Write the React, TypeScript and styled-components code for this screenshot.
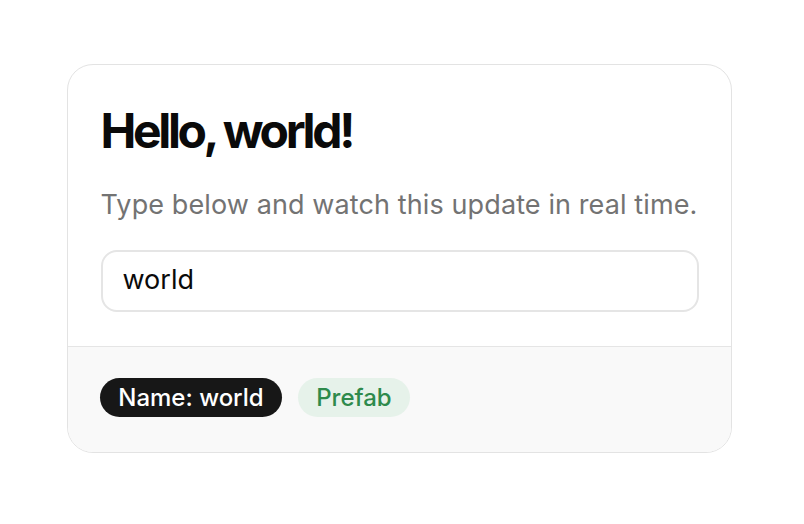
import React, { useState } from "react";
import styled, { createGlobalStyle } from "styled-components";

const Global = createGlobalStyle`
  html, body { margin: 0; padding: 0; background: #ffffff; }
  body { font-family: Inter, "Noto Sans", sans-serif; }
`;

const Page = styled.div`
  width: 804px;
  height: 524px;
  display: flex;
  align-items: flex-start;
  justify-content: flex-start;
  padding: 64px 0 0 67px;
  box-sizing: border-box;
`;

const Card = styled.div`
  width: 665px;
  box-sizing: border-box;
  border: 1.5px solid #e3e3e3;
  border-radius: 26px;
  overflow: hidden;
  background: #ffffff;
`;

const Body = styled.div`
  padding: 36px 32.5px 34px 32.5px;
  display: flex;
  flex-direction: column;
`;

const Title = styled.h1`
  margin: 0;
  font-size: 48px;
  line-height: 60px;
  font-weight: 700;
  letter-spacing: -0.07em;
  color: #0a0a0a;
`;

const Subtitle = styled.p`
  margin: 24px 0 0 0;
  font-size: 27px;
  line-height: 40.5px;
  letter-spacing: 0.004em;
  color: #737373;
`;

const Input = styled.input`
  margin-top: 24.5px;
  height: 62px;
  box-sizing: border-box;
  border: 2px solid #e5e5e5;
  border-radius: 16px;
  padding: 0 20px 4px 20px;
  font-family: Inter, "Noto Sans", sans-serif;
  font-size: 27px;
  color: #0a0a0a;
  outline: none;
  background: #fff;
`;

const Footer = styled.div`
  border-top: 1.5px solid #e5e5e5;
  background: #f9f9f9;
  padding: 31px 32.5px 35px 32px;
  display: flex;
  gap: 16px;
  align-items: center;
`;

const Badge = styled.span<{ $variant: "dark" | "green" }>`
  display: inline-flex;
  align-items: center;
  height: 39px;
  padding: 0 18.25px;
  border-radius: 999px;
  font-size: 24px;
  font-weight: 500;
  background: ${(p) => (p.$variant === "dark" ? "#171717" : "#e6f2ea")};
  color: ${(p) => (p.$variant === "dark" ? "#ffffff" : "#2e8a4c")};
`;

export default function App() {
  const [name, setName] = useState("world");
  return (
    <>
      <Global />
      <Page>
        <Card>
          <Body>
            <Title>Hello, {name}!</Title>
            <Subtitle>Type below and watch this update in real time.</Subtitle>
            <Input value={name} onChange={(e) => setName(e.target.value)} />
          </Body>
          <Footer>
            <Badge $variant="dark">Name: {name}</Badge>
            <Badge $variant="green">Prefab</Badge>
          </Footer>
        </Card>
      </Page>
    </>
  );
}
